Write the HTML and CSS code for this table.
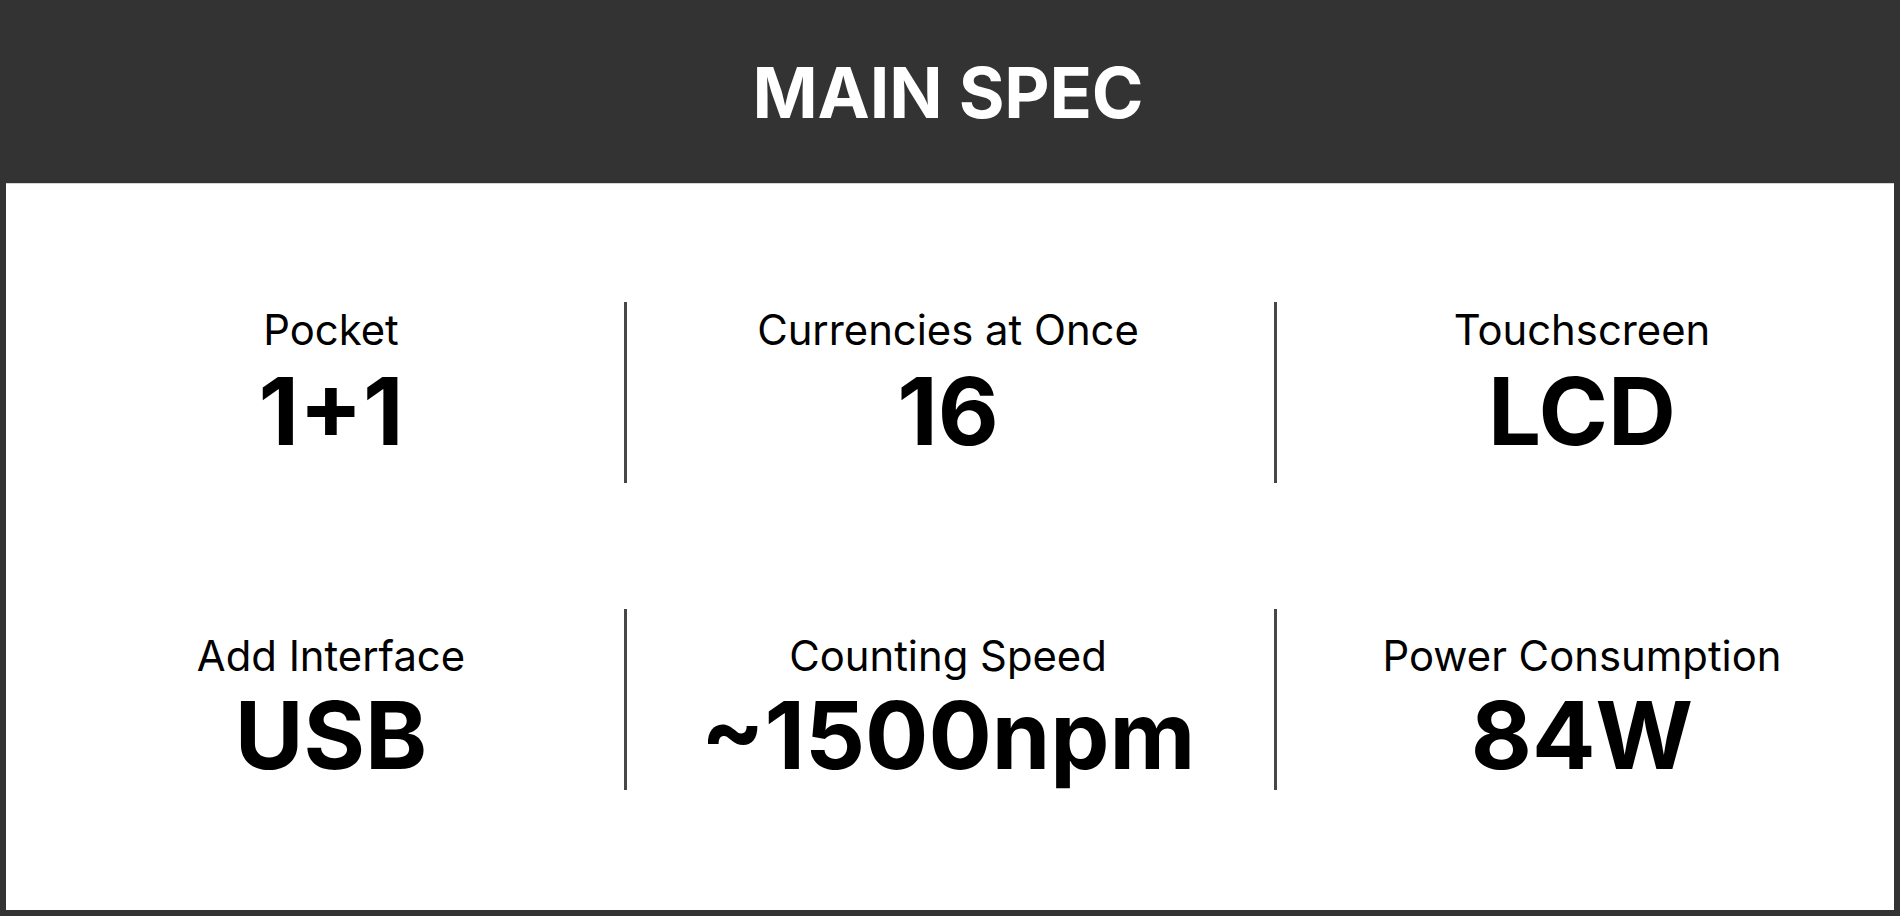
FILE: index.html
```html
<!DOCTYPE html>
<html lang="en">
<head>
<meta charset="utf-8">
<title>Main Spec</title>
<link rel="stylesheet" href="styles.css">
</head>
<body>
<div class="page">
  <header class="header"><h1 class="title">MAIN SPEC</h1></header>
  <main class="panel">
    <section class="row row-first">
      <div class="cell cell-left">
        <div class="label">Pocket</div>
        <div class="value">1+1</div>
      </div>
      <div class="divider"></div>
      <div class="cell cell-mid">
        <div class="label">Currencies at Once</div>
        <div class="value">16</div>
      </div>
      <div class="divider"></div>
      <div class="cell cell-right">
        <div class="label">Touchscreen</div>
        <div class="value">LCD</div>
      </div>
    </section>
    <section class="row row-second">
      <div class="cell cell-left">
        <div class="label">Add Interface</div>
        <div class="value">USB</div>
      </div>
      <div class="divider"></div>
      <div class="cell cell-mid">
        <div class="label">Counting Speed</div>
        <div class="value">~1500npm</div>
      </div>
      <div class="divider"></div>
      <div class="cell cell-right">
        <div class="label">Power Consumption</div>
        <div class="value">84W</div>
      </div>
    </section>
  </main>
</div>
</body>
</html>
```
FILE: styles.css
```css
* { box-sizing: border-box; }
html, body {
  margin: 0;
  padding: 0;
  background: #333333;
}
body {
  width: 1900px;
  height: 916px;
  overflow: hidden;
  font-family: Inter, "Noto Sans", "Liberation Sans", sans-serif;
}
.page {
  display: flex;
  flex-direction: column;
  height: 916px;
}
.header {
  height: 183px;
  display: flex;
  align-items: center;
  justify-content: center;
  padding-top: 2px;
  padding-right: 4px;
  background: #333333;
}
.title {
  margin: 0;
  color: #ffffff;
  font-size: 70px;
  font-weight: 700;
  line-height: 70px;
  letter-spacing: -0.2px;
}
.panel {
  margin: 0 6px 6px 6px;
  height: 727px;
  background: #ffffff;
  border-top: 1px solid #d4d4d4;
  padding-top: 118px;
  display: flex;
  flex-direction: column;
  gap: 126px;
}
.row {
  display: grid;
  grid-template-columns: 618px 3px 647px 3px 617px;
  height: 181px;
}
.divider {
  background: #474747;
  height: 181px;
}
.cell {
  display: flex;
  flex-direction: column;
  align-items: center;
  color: #000000;
}
.row-first .cell { padding-top: 4px; }
.row-second .cell { padding-top: 23px; }
.cell-left { padding-left: 32px; }
.cell-mid { padding-right: 5px; }
.cell-right { padding-right: 7px; }
.label {
  font-size: 41.8px;
  font-weight: 400;
  line-height: 49px;
  white-space: nowrap;
}
.value {
  margin-top: 6px;
  font-size: 94px;
  font-weight: 700;
  line-height: 100px;
  white-space: nowrap;
}
.row-second .value { margin-top: 4px; }
```
